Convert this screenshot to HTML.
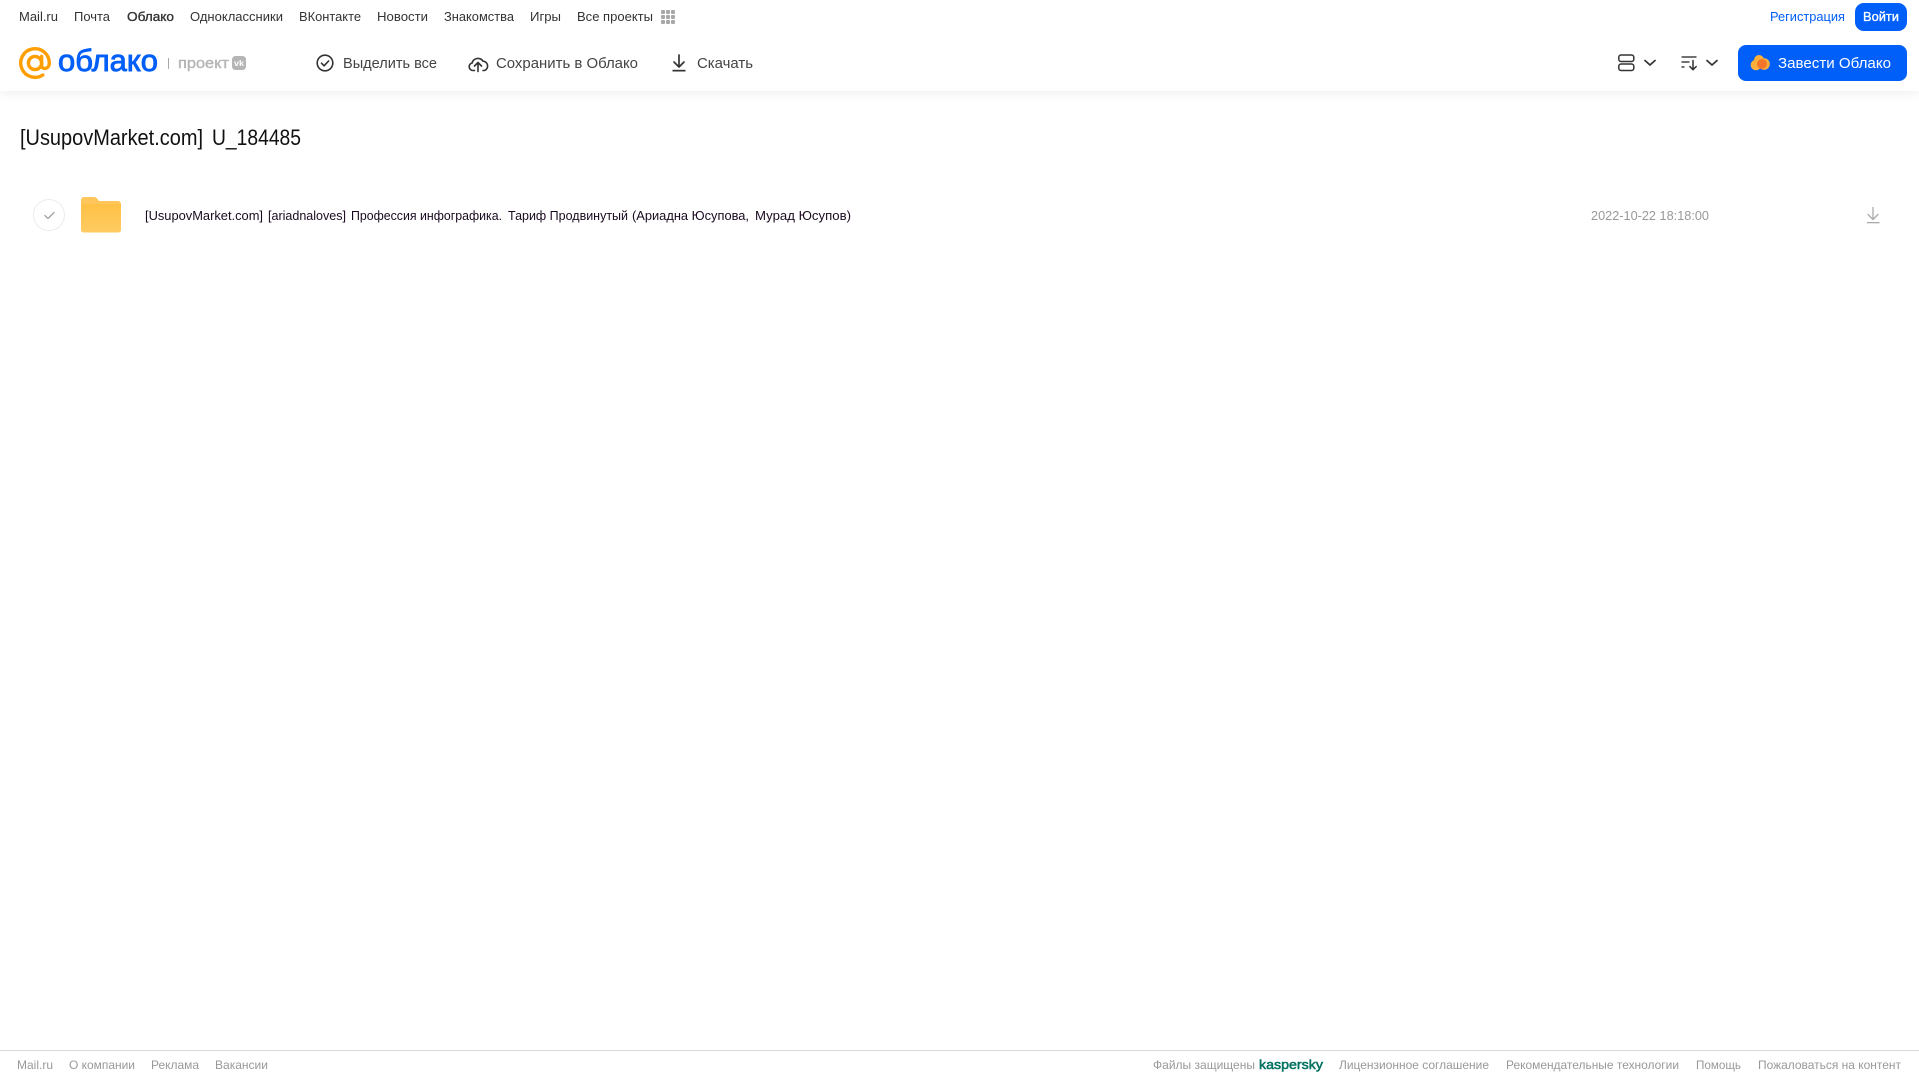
<!DOCTYPE html>
<html lang="ru">
<head>
<meta charset="utf-8">
<title>Облако</title>
<style>
html,body{margin:0;padding:0;width:1919px;height:1079px;overflow:hidden;background:#fff}
#hdr{position:absolute;left:0;top:0;width:1919px;height:91px;background:#fff;box-shadow:0 2px 10px rgba(0,0,0,.07)}
svg{position:absolute;left:0;top:0}
text{font-family:"Liberation Sans","Noto Sans CJK SC",sans-serif}
.n{font-size:13px;fill:#333}
.a{font-size:15px;fill:#444}
.f{font-size:12px;fill:#999}
.r{font-size:13px;fill:#1a0a20}
</style>
</head>
<body>
<div id="hdr"></div>
<svg width="1919" height="1079" viewBox="0 0 1919 1079" xmlns="http://www.w3.org/2000/svg">
<defs>
<linearGradient id="fg" x1="0" y1="0" x2="0" y2="1"><stop offset="0" stop-color="#ffc145"/><stop offset="1" stop-color="#ffcb62"/></linearGradient>
</defs>

<!-- top nav -->
<text class="n" x="19" y="21" textLength="39" lengthAdjust="spacingAndGlyphs">Mail.ru</text>
<text class="n" x="74" y="21" textLength="36" lengthAdjust="spacingAndGlyphs">Почта</text>
<text class="n" x="127" y="21" textLength="47" lengthAdjust="spacingAndGlyphs" stroke="#333" stroke-width=".35">Облако</text>
<text class="n" x="190" y="21" textLength="93" lengthAdjust="spacingAndGlyphs">Одноклассники</text>
<text class="n" x="299" y="21" textLength="62" lengthAdjust="spacingAndGlyphs">ВКонтакте</text>
<text class="n" x="377" y="21" textLength="51" lengthAdjust="spacingAndGlyphs">Новости</text>
<text class="n" x="444" y="21" textLength="70" lengthAdjust="spacingAndGlyphs">Знакомства</text>
<text class="n" x="530" y="21" textLength="31" lengthAdjust="spacingAndGlyphs">Игры</text>
<text class="n" x="577" y="21" textLength="76" lengthAdjust="spacingAndGlyphs">Все проекты</text>
<g fill="#a8a8a8">
<rect x="661" y="10" width="4" height="4" rx="1"/><rect x="666" y="10" width="4" height="4" rx="1"/><rect x="671" y="10" width="4" height="4" rx="1"/>
<rect x="661" y="15" width="4" height="4" rx="1"/><rect x="666" y="15" width="4" height="4" rx="1"/><rect x="671" y="15" width="4" height="4" rx="1"/>
<rect x="661" y="20" width="4" height="4" rx="1"/><rect x="666" y="20" width="4" height="4" rx="1"/><rect x="671" y="20" width="4" height="4" rx="1"/>
</g>
<text x="1770" y="21" font-size="13" fill="#005ff9" textLength="75" lengthAdjust="spacingAndGlyphs">Регистрация</text>
<rect x="1855" y="3" width="52" height="28" rx="9" fill="#005ff9"/>
<text x="1863" y="21" font-size="13" fill="#fff" stroke="#fff" stroke-width=".35" textLength="36" lengthAdjust="spacingAndGlyphs">Войти</text>

<!-- logo -->
<circle cx="35" cy="63" r="6.600" fill="none" stroke="#ff9e00" stroke-width="3.400"/>
<path d="M41.600 56.500V65.500C41.600 69.800 49.300 69.800 49.300 63A14.300 14.300 0 1 0 42.800 75" fill="none" stroke="#ff9e00" stroke-width="3.400" stroke-linecap="round"/>
<text x="58" y="71" font-size="31" fill="#005ff9" stroke="#005ff9" stroke-width=".9" textLength="100" lengthAdjust="spacingAndGlyphs">облако</text>
<rect x="168" y="58" width="1" height="11" fill="#aaa"/>
<text x="178" y="68" font-size="15" fill="#b5b5b5" stroke="#b5b5b5" stroke-width=".4" textLength="51" lengthAdjust="spacingAndGlyphs">проект</text>
<rect x="232" y="56" width="14" height="14" rx="3.500" fill="#b5b5b5"/>
<text x="234" y="66" font-size="8" font-weight="700" fill="#fff" textLength="10" lengthAdjust="spacingAndGlyphs">vk</text>

<!-- actions -->
<circle cx="325" cy="63" r="7.800" fill="none" stroke="#333" stroke-width="1.600"/>
<path d="M321.500 63.200l2.600 2.600 4.500-4.800" fill="none" stroke="#333" stroke-width="1.600" stroke-linecap="round" stroke-linejoin="round"/>
<text class="a" x="343" y="68" textLength="94" lengthAdjust="spacingAndGlyphs">Выделить все</text>
<path d="M474.500 70.500h-1.500a3.800 3.800 0 0 1-.9-7.500 6 6 0 0 1 10.900-1.800 4.800 4.800 0 0 1 1.500 9.300h-1.500" fill="none" stroke="#333" stroke-width="1.600" stroke-linecap="round" stroke-linejoin="round"/>
<path d="M478 71.500v-8.500M474.500 66l3.500-3.500 3.500 3.500" fill="none" stroke="#333" stroke-width="1.600" stroke-linecap="round" stroke-linejoin="round"/>
<text class="a" x="496" y="68" textLength="142" lengthAdjust="spacingAndGlyphs">Сохранить в Облако</text>
<path d="M679 55v11.500M674 62l5 5 5-5" fill="none" stroke="#333" stroke-width="1.700" stroke-linecap="round" stroke-linejoin="round"/>
<rect x="672.500" y="69.800" width="13" height="1.700" fill="#333"/>
<text class="a" x="697" y="68" textLength="56" lengthAdjust="spacingAndGlyphs">Скачать</text>

<!-- right controls -->
<rect x="1618.800" y="55" width="15" height="6.500" rx="2.200" fill="none" stroke="#333" stroke-width="1.500"/>
<rect x="1618.800" y="64" width="15" height="6.500" rx="2.200" fill="none" stroke="#333" stroke-width="1.500"/>
<path d="M1645 60.500l5 4.500 5-4.500" fill="none" stroke="#333" stroke-width="1.700" stroke-linecap="round" stroke-linejoin="round"/>
<path d="M1681.500 57h15M1681.500 62h8M1681.500 67h3" fill="none" stroke="#444" stroke-width="1.400"/>
<path d="M1693 60.500v8.500M1689.800 66.500l3.200 3.200 3.200-3.200" fill="none" stroke="#333" stroke-width="1.500" stroke-linecap="round" stroke-linejoin="round"/>
<path d="M1707 60.500l5 4.500 5-4.500" fill="none" stroke="#333" stroke-width="1.700" stroke-linecap="round" stroke-linejoin="round"/>
<rect x="1738" y="45" width="169" height="36" rx="8" fill="#005ff9"/>
<circle cx="1764" cy="64" r="5.800" fill="#ffb03a"/>
<circle cx="1756" cy="65" r="5.300" fill="#ffb03a"/>
<circle cx="1759" cy="60" r="5" fill="#ffb03a"/>
<circle cx="1762" cy="64" r="5" fill="#f5762a"/>
<text x="1778" y="68" font-size="15" fill="#fff" textLength="113" lengthAdjust="spacingAndGlyphs">Завести Облако</text>

<!-- title -->
<text x="20" y="145" font-size="22" fill="#111" textLength="183" lengthAdjust="spacingAndGlyphs">[UsupovMarket.com]</text>
<text x="212" y="145" font-size="22" fill="#111" textLength="89" lengthAdjust="spacingAndGlyphs">U_184485</text>

<!-- row -->
<circle cx="49" cy="215" r="15.500" fill="#fff" stroke="#ececec" stroke-width="1"/>
<path d="M45 215.500l3 3 6-6" fill="none" stroke="#a5a5a5" stroke-width="1.400" stroke-linecap="round" stroke-linejoin="round"/>
<path d="M81 200a3 3 0 0 1 3-3h9.500c2 0 3 .8 4 2l1.500 2H118a3 3 0 0 1 3 3v5H81z" fill="#ffc65c"/>
<path d="M81 204h40v26a2.500 2.500 0 0 1-2.500 2.500h-35A2.500 2.500 0 0 1 81 230z" fill="url(#fg)"/>
<text class="r" x="145" y="220" textLength="118" lengthAdjust="spacingAndGlyphs">[UsupovMarket.com]</text>
<text class="r" x="268" y="220" textLength="78" lengthAdjust="spacingAndGlyphs">[ariadnaloves]</text>
<text class="r" x="351" y="220" textLength="151" lengthAdjust="spacingAndGlyphs">Профессия инфографика.</text>
<text class="r" x="508" y="220" textLength="120" lengthAdjust="spacingAndGlyphs">Тариф Продвинутый</text>
<text class="r" x="632" y="220" textLength="117" lengthAdjust="spacingAndGlyphs">(Ариадна Юсупова,</text>
<text class="r" x="755" y="220" textLength="96" lengthAdjust="spacingAndGlyphs">Мурад Юсупов)</text>
<text x="1591" y="220" font-size="13" fill="#999" textLength="118" lengthAdjust="spacingAndGlyphs">2022-10-22 18:18:00</text>
<path d="M1873 207.500v12M1868 214.500l5 5 5-5" fill="none" stroke="#aaa" stroke-width="1.300" stroke-linecap="round" stroke-linejoin="round"/>
<rect x="1867" y="222" width="12.500" height="1.300" fill="#aaa"/>

<!-- footer -->
<rect x="0" y="1050" width="1919" height="1" fill="#d8d8d8"/>
<text class="f" x="17" y="1069" textLength="36" lengthAdjust="spacingAndGlyphs">Mail.ru</text>
<text class="f" x="69" y="1069" textLength="66" lengthAdjust="spacingAndGlyphs">О компании</text>
<text class="f" x="151" y="1069" textLength="48" lengthAdjust="spacingAndGlyphs">Реклама</text>
<text class="f" x="215" y="1069" textLength="53" lengthAdjust="spacingAndGlyphs">Вакансии</text>
<text class="f" x="1153" y="1069" textLength="102" lengthAdjust="spacingAndGlyphs">Файлы защищены</text>
<text x="1259" y="1069" font-size="13" fill="#00705f" stroke="#00705f" stroke-width=".5" textLength="64" lengthAdjust="spacingAndGlyphs">kaspersky</text>
<text class="f" x="1339" y="1069" textLength="150" lengthAdjust="spacingAndGlyphs">Лицензионное соглашение</text>
<text class="f" x="1506" y="1069" textLength="173" lengthAdjust="spacingAndGlyphs">Рекомендательные технологии</text>
<text class="f" x="1696" y="1069" textLength="45" lengthAdjust="spacingAndGlyphs">Помощь</text>
<text class="f" x="1758" y="1069" textLength="143" lengthAdjust="spacingAndGlyphs">Пожаловаться на контент</text>
</svg>
</body>
</html>
